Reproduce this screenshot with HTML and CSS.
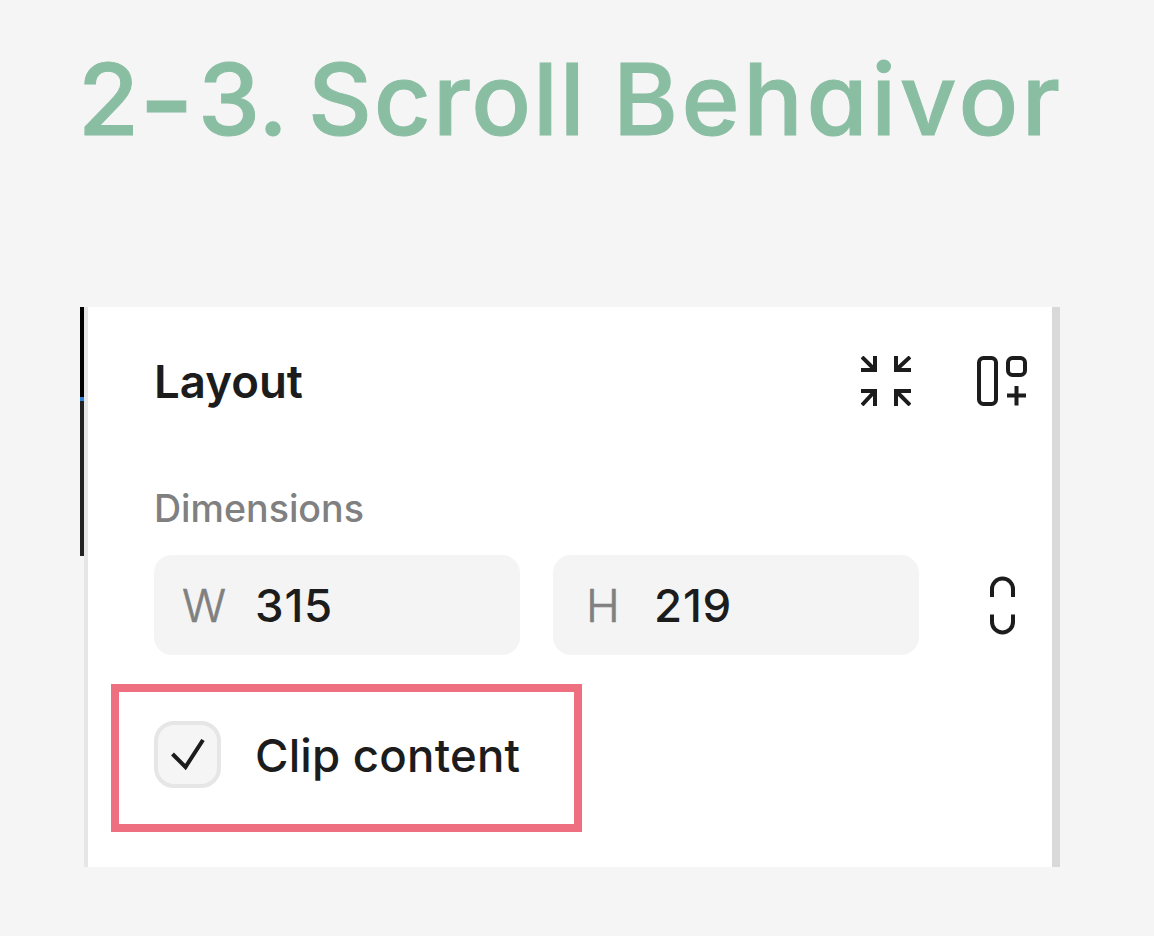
FILE: index.html
```html
<!DOCTYPE html>
<html lang="en">
<head>
    <meta charset="UTF-8">
    <meta name="viewport" content="width=device-width, initial-scale=1.0">
    <title>2-3. Scroll Behaivor</title>
    <link rel="stylesheet" href="styles.css">
</head>
<body>
    <h1 class="title">
        <span class="number">2<span class="dash">-</span>3.</span>
        <span class="scroll">Scroll</span>
        <span class="behavior">Behaivor</span>
    </h1>
    <div class="panel">
        <div class="canvas-edge">
            <div class="edge-top"></div>
            <div class="edge-line"></div>
            <div class="edge-bottom"></div>
        </div>
        <div class="panel-body">
            <div class="panel-header">
                <h2 class="heading">Layout</h2>
                <svg class="icon-fit" width="50" height="50" viewBox="0 0 50 50">
                    <path d="M1 1L14 14M14 0V14H0M49 1L35 14M35 0V14H50M1 49L14 35M0 35H14V50M49 49L35 35M50 35H35V50"/>
                </svg>
                <svg class="icon-auto" width="50" height="50" viewBox="0 0 50 50">
                    <rect x="2" y="2" width="17" height="46" rx="4.5"/>
                    <rect x="31" y="2" width="17" height="17" rx="4.5"/>
                    <path d="M30 39.5H49M39.5 30V49.5"/>
                </svg>
            </div>
            <div class="label">Dimensions</div>
            <div class="fields">
                <div class="field">
                    <span class="axis">W</span>
                    <span class="value">315</span>
                </div>
                <div class="field">
                    <span class="axis axis-h">H</span>
                    <span class="value">219</span>
                </div>
                <svg class="icon-ratio" width="26" height="60" viewBox="0 0 26 60">
                    <path d="M2 22V14A10.5 10.5 0 0 1 23 14V22M2 39.5V47A10.5 10.5 0 0 0 23 47V39.5"/>
                </svg>
            </div>
            <div class="clip-row">
                <div class="checkbox">
                    <svg width="34" height="32" viewBox="0 0 34 32">
                        <path d="M1.5 15L14.5 28L32 1"/>
                    </svg>
                </div>
                <span class="clip-label">Clip content</span>
            </div>
        </div>
    </div>
</body>
</html>
```
FILE: styles.css
```css
* {
    margin: 0;
    padding: 0;
    box-sizing: border-box;
}

body {
    background: #f5f5f5;
    height: 100vh;
    overflow: hidden;
    font-family: Inter, sans-serif;
    color: #1c1c1c;
}

.title {
    display: flex;
    height: 306.5px;
    padding: 38px 0 0 78px;
    font-size: 99px;
    line-height: 122px;
    font-weight: 500;
    color: #8abea3;
    font-feature-settings: "cv11", "ss03";
    -webkit-text-stroke: 1px #8abea3;
}

.number {
    width: 230px;
}

.dash {
    font-size: 119px;
    line-height: 0;
    vertical-align: -8px;
    letter-spacing: 4px;
}

.scroll {
    width: 305px;
    letter-spacing: 1.9px;
}

.behavior {
    letter-spacing: 3.6px;
}

.panel {
    display: flex;
    width: 980px;
    height: 560px;
    margin-left: 80px;
}

.canvas-edge {
    width: 4px;
}

.edge-top {
    height: 90px;
    background: #000;
}

.edge-line {
    height: 4px;
    background: #2f80d8;
}

.edge-bottom {
    height: 155px;
    background: #222;
}

.panel-body {
    flex: 1;
    background: #fff;
    border-left: 4px solid #e6e6e6;
    border-right: 8px solid #d9d9d9;
    padding: 49px 25px 0 23px;
}

svg {
    display: block;
    fill: none;
    stroke: #1c1c1c;
    stroke-width: 4;
}

.panel-header {
    display: flex;
    align-items: center;
    height: 50px;
    padding-left: 43px;
}

.heading {
    flex: 1;
    padding-top: 2px;
    font-size: 45.6px;
    font-weight: 600;
}

.icon-auto {
    margin-left: 66px;
}

.label {
    padding: 80px 0 0 43px;
    font-size: 37.6px;
    line-height: 46px;
    font-weight: 450;
    color: #808080;
}

.fields {
    display: flex;
    align-items: center;
    gap: 33px;
    height: 100px;
    margin: 23.5px 0 28.5px;
    padding-left: 43px;
}

.field {
    display: flex;
    flex-shrink: 0;
    align-items: center;
    width: 366px;
    height: 100px;
    padding-left: 28px;
    border-radius: 18px;
    background: #f4f4f4;
    font-size: 45.6px;
}

.axis {
    width: 73px;
    font-weight: 300;
    color: #808080;
    -webkit-text-stroke: 0.6px #808080;
}

.axis-h {
    padding-left: 5px;
}

.value {
    font-weight: 450;
    letter-spacing: 0.8px;
}

.icon-ratio {
    flex-shrink: 0;
    margin-left: 38px;
}

.clip-row {
    display: flex;
    align-items: center;
    gap: 34px;
    width: 471px;
    height: 148px;
    padding-left: 35px;
    padding-bottom: 6px;
    border: 8px solid #ee7080;
}

.checkbox {
    display: flex;
    align-items: center;
    justify-content: center;
    width: 67px;
    height: 67px;
    border: 4px solid #e6e6e6;
    border-radius: 20px;
    background: #f5f5f5;
}

.clip-label {
    padding-top: 2px;
    font-size: 45.6px;
    font-weight: 450;
    letter-spacing: 0.2px;
}
```
